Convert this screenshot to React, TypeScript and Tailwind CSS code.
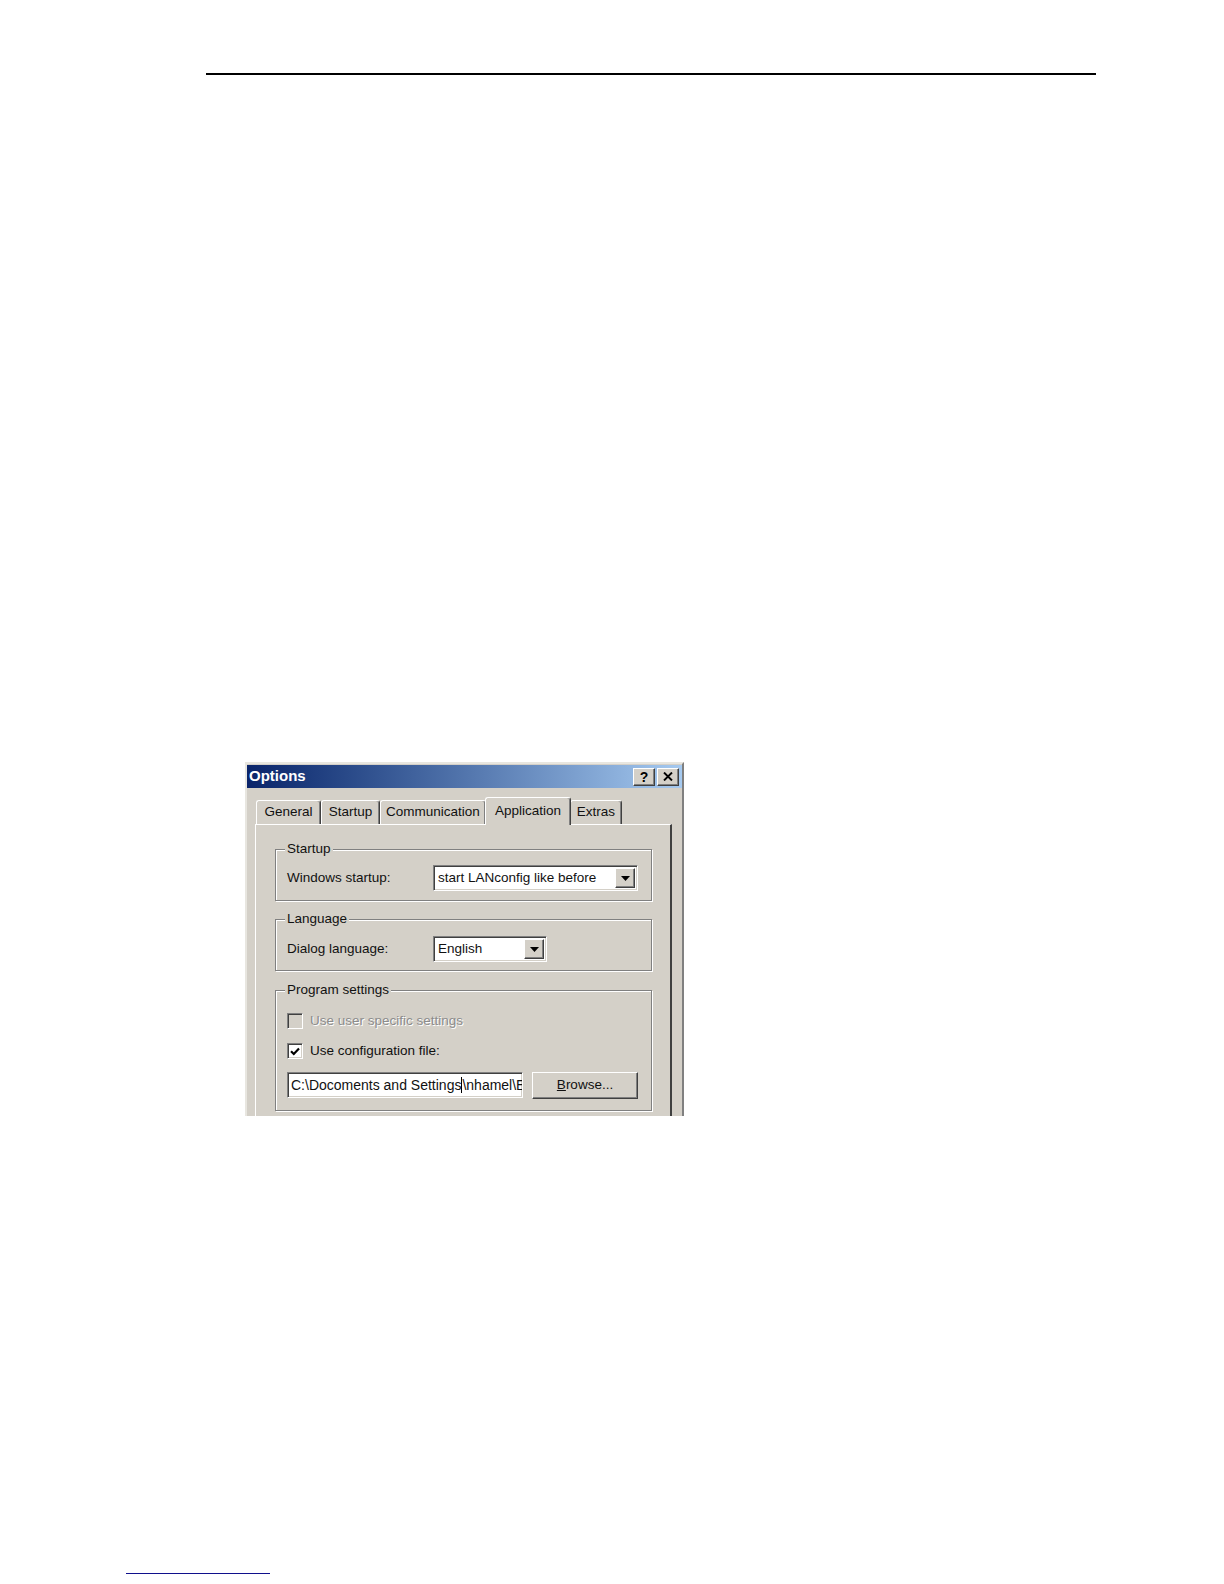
import type { ReactNode } from "react";

const font = { fontFamily: '"Liberation Sans", Arial, sans-serif' };

const raised =
  "border border-t-white border-l-white border-r-[#404040] border-b-[#404040] shadow-[inset_-1px_-1px_0_#808080]";
const sunken =
  "border border-t-[#808080] border-l-[#808080] border-r-white border-b-white shadow-[inset_1px_1px_0_#404040,inset_-1px_-1px_0_#d4d0c8]";

function ArrowButton() {
  return (
    <div className={`flex h-full w-[20px] items-center justify-center bg-[#d4d0c8] ${raised}`}>
      <svg width="9" height="5" viewBox="0 0 9 5">
        <path d="M0 0h9L4.5 5z" fill="#000" />
      </svg>
    </div>
  );
}

function Combo({ value, width }: { value: string; width: string }) {
  return (
    <div className={`flex h-[26px] ${width} bg-white p-[2px] ${sunken}`}>
      <div className="flex flex-1 items-center overflow-hidden whitespace-nowrap pl-[2px] text-[13.5px] text-[#111]">
        {value}
      </div>
      <ArrowButton />
    </div>
  );
}

function GroupBox({ label, className, children }: { label: string; className: string; children: ReactNode }) {
  return (
    <div
      className={`relative border border-[#808080] shadow-[inset_1px_1px_0_#fff,1px_1px_0_#fff] ${className}`}
    >
      <span className="absolute -top-[9px] left-[9px] bg-[#d4d0c8] px-[2px] text-[13.5px] leading-[16px] text-[#111]">
        {label}
      </span>
      {children}
    </div>
  );
}

function Checkbox({ checked, disabled, label }: { checked?: boolean; disabled?: boolean; label: string }) {
  return (
    <div className="flex h-[16px] items-center gap-[7px]">
      <div
        className={`flex h-[16px] w-[16px] items-center justify-center ${sunken} ${
          disabled ? "bg-[#d4d0c8]" : "bg-white"
        }`}
      >
        {checked && (
          <svg width="10" height="9" viewBox="0 0 10 9">
            <path d="M1 4.2l2.8 2.8L9 1.6" fill="none" stroke="#000" strokeWidth="2.2" />
          </svg>
        )}
      </div>
      <span
        className={`text-[13.5px] leading-[16px] ${
          disabled ? "text-[#8c8c8c] [text-shadow:1px_1px_0_#fff]" : "text-[#111]"
        }`}
      >
        {label}
      </span>
    </div>
  );
}

const tabs = [
  { name: "General", w: "w-[65px]" },
  { name: "Startup", w: "w-[59px]" },
  { name: "Communication", w: "w-[106px]" },
  { name: "Application", w: "w-[86px]", active: true },
  { name: "Extras", w: "w-[52px]" },
];

function OptionsDialog() {
  return (
    <div className="ml-[245px] mt-[687px] h-[354px] w-[439px] overflow-hidden border-2 border-b-0 border-t-[#e8e6e0] border-l-[#e8e6e0] border-r-[#808080] bg-[#d4d0c8]">
      {/* title bar */}
      <div className="mt-[1px] flex h-[23px] items-center justify-between bg-gradient-to-r from-[#0a246a] to-[#a6caf0] pl-[2px] pr-[3px]">
        <span className="text-[15px] font-bold text-white">Options</span>
        <div className="flex gap-[2px]">
          <div className={`flex h-[18px] w-[22px] items-center justify-center bg-[#d4d0c8] ${raised}`}>
            <span className="text-[14px] font-bold leading-none text-black">?</span>
          </div>
          <div className={`flex h-[18px] w-[22px] items-center justify-center bg-[#d4d0c8] ${raised}`}>
            <svg width="10" height="9" viewBox="0 0 10 9">
              <path d="M1 0.5l8 8M9 0.5l-8 8" stroke="#000" strokeWidth="1.9" />
            </svg>
          </div>
        </div>
      </div>

      {/* tabs */}
      <div className="ml-[8px] mr-[10px] mt-[9px]">
        <div className="flex h-[27px] items-end pl-[1px]">
          {tabs.map((t) => (
            <div
              key={t.name}
              className={`flex ${t.w} justify-center rounded-t-[3px] border border-b-0 border-t-white border-l-white border-r-[#404040] bg-[#d4d0c8] text-[13.5px] text-[#111] shadow-[inset_-1px_0_0_#808080] ${
                t.active
                  ? "relative z-10 -mb-[1px] -ml-[1px] -mr-[1px] h-[28px] items-start pt-[3px]"
                  : "h-[24px] items-center"
              }`}
            >
              {t.name}
            </div>
          ))}
        </div>

        {/* panel */}
        <div className="h-[320px] border-l border-t border-r-2 border-l-white border-t-white border-r-[#404040] pl-[19px] pr-[18px] pt-[24px]">
          <GroupBox label="Startup" className="h-[52px] pl-[11px] pt-[15px]">
            <div className="flex items-center">
              <span className="w-[146px] text-[13.5px] text-[#111]">Windows startup:</span>
              <Combo value="start LANconfig like before" width="w-[205px]" />
            </div>
          </GroupBox>

          <GroupBox label="Language" className="mt-[18px] h-[52px] pl-[11px] pt-[16px]">
            <div className="flex items-center">
              <span className="w-[146px] text-[13.5px] text-[#111]">Dialog language:</span>
              <Combo value="English" width="w-[114px]" />
            </div>
          </GroupBox>

          <GroupBox label="Program settings" className="mt-[19px] h-[121px] pl-[11px] pt-[22px]">
            <div className="flex flex-col gap-[14px]">
              <Checkbox disabled label="Use user specific settings" />
              <Checkbox checked label="Use configuration file:" />
            </div>
            <div className="mt-[13px] flex items-start gap-[9px]">
              <div className={`flex h-[26px] w-[236px] items-center overflow-hidden whitespace-nowrap bg-white pl-[3px] text-[14px] text-[#111] ${sunken}`}>
                <span>C:\Docoments and Settings</span>
                <span className="h-[16px] w-px shrink-0 bg-black" />
                <span>\nhamel\Eigene Dateien</span>
              </div>
              <div className={`flex h-[27px] w-[106px] items-center justify-center bg-[#d4d0c8] text-[13.5px] text-[#111] ${raised}`}>
                <span className="underline">B</span>
                <span>rowse...</span>
              </div>
            </div>
          </GroupBox>
        </div>
      </div>
    </div>
  );
}

export default function App() {
  return (
    <div className="min-h-[1584px] w-[1224px] bg-white pt-[73px]" style={font}>
      <div className="ml-[206px] h-[2px] w-[890px] bg-black" />
      <OptionsDialog />
      <div className="ml-[126px] mt-[457px] h-px w-[144px] bg-[#10108c]" />
    </div>
  );
}
